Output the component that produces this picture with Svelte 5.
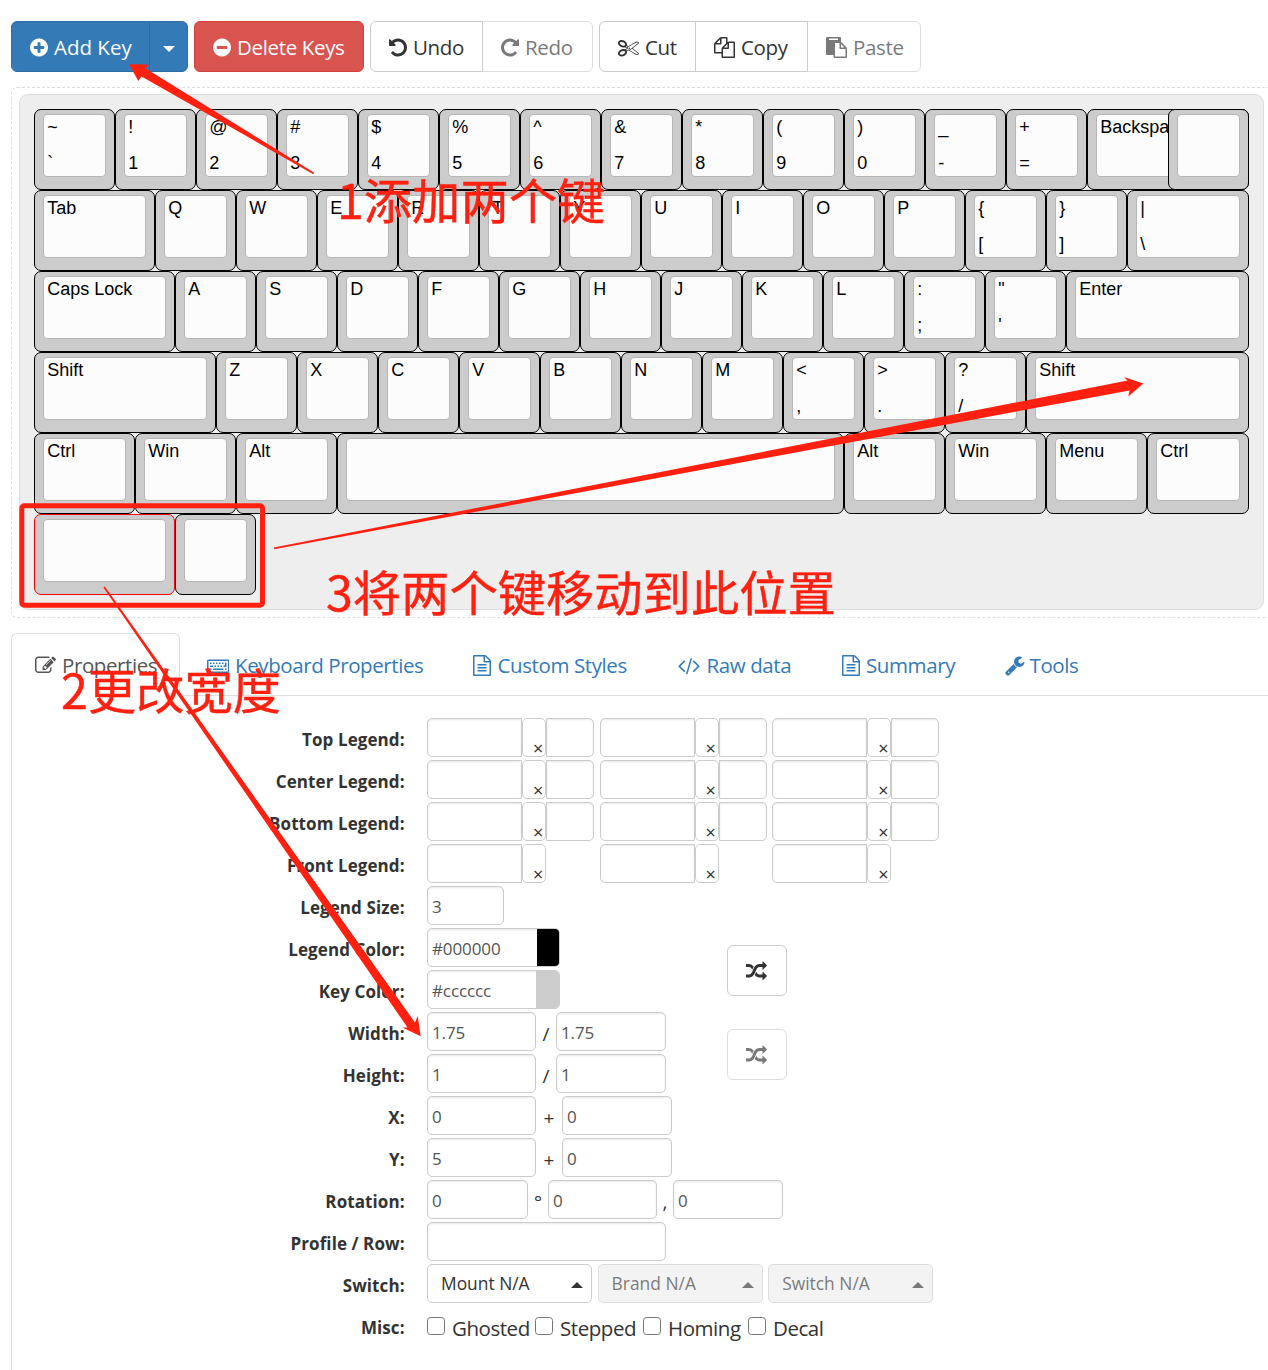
<script>
  const circle = 'm320-64q0 209-103 385.5t-279.5 279.5-385.5 103-385.5-103-279.5-279.5-103-385.5 103-385.5 279.5-279.5 385.5-103 385.5 103 279.5 279.5 103 385.5z';
  const undoPath = 'M1664 896q0 156-61 298t-164 245-245 164-298 61q-172 0-327-72.5t-264-204.5q-7-10-6.5-22.5t8.5-20.5l137-138q10-9 25-9 16 2 23 12 73 95 179 147t225 52q104 0 198.5-40.5t163.5-109.5 109.5-163.5 40.5-198.5-40.5-198.5-109.5-163.5-163.5-109.5-198.5-40.5q-98 0-188 35.5t-160 101.5l137 138q31 30 14 69-17 40-59 40h-448q-26 0-45-19t-19-45v-448q0-42 40-59 39-17 69 14l130 129q107-101 244.5-156.5t284.5-55.5q156 0 298 61t245 164 164 245 61 298z';
  const icons = {
    plus: { box: '128 0 1536 1792', w: 18, d: 'M1344 960v-128q0-26-19-45t-45-19h-256v-256q0-26-19-45t-45-19h-128q-26 0-45 19t-19 45v256h-256q-26 0-45 19t-19 45v128q0 26 19 45t45 19h256v256q0 26 19 45t45 19h128q26 0 45-19t19-45v-256h256q26 0 45-19t19-45z' + circle },
    minus: { box: '128 0 1536 1792', w: 18, d: 'M1344 960v-128q0-26-19-45t-45-19h-768q-26 0-45 19t-19 45v128q0 26 19 45t45 19h768q26 0 45-19t19-45z' + circle },
    undo: { box: '128 0 1536 1792', w: 18, d: undoPath },
    redo: { box: '128 0 1536 1792', w: 18, d: undoPath, flip: true },
    cut: { box: '0 0 1792 1792', w: 21, d: 'M960 896q26 0 45 19t19 45-19 45-45 19-45-19-19-45 19-45 45-19zm300 64l507 398q28 20 25 56-5 35-35 51l-128 64q-13 7-29 7-17 0-31-8l-690-387-110 66q-8 4-12 5 14 49 10 97-7 77-56 147.5t-132 123.5q-132 84-277 84-136 0-222-78-90-84-79-207 7-76 56-147t131-124q132-84 278-84 83 0 151 31 9-13 22-22l122-73-122-73q-13-9-22-22-68 31-151 31-146 0-278-84-82-53-131-124t-56-147q-5-59 15.5-113t63.5-93q85-79 222-79 145 0 277 84 83 52 132 123t56 148q4 48-10 97 4 1 12 5l110 66 690-387q14-8 31-8 16 0 29 7l128 64q30 16 35 51 3 36-25 56zm-681-260q46-42 21-108t-106-117q-92-59-192-59-74 0-113 36-46 42-21 108t106 117q92 59 192 59 74 0 113-36zm-85 745q81-51 106-117t-21-108q-39-36-113-36-100 0-192 59-81 51-106 117t21 108q39 36 113 36 100 0 192-59zm178-613l96 58v-11q0-36 33-56l14-8-79-44-26 26q-3 3-10 11t-12 12q-2 2-4 3.5t-3 2.5zm224 224l96 32 736-576-128-64-768 431v113l-160 96 9 8q2 2 7 6 4 4 11 12t11 12l26 26zm704 416l128-64-520-408-177 138q-2 3-13 7z' },
    copy: { box: '0 0 1792 1792', w: 21, d: 'M1696 384q40 0 68 28t28 68v1216q0 40-28 68t-68 28h-960q-40 0-68-28t-28-68v-288h-544q-40 0-68-28t-28-68v-672q0-40 20-88t48-76l408-408q28-28 76-48t88-20h416q40 0 68 28t28 68v328q68-40 128-40h416zm-544 213l-299 299h299v-299zm-640-384l-299 299h299v-299zm196 647l316-316v-416h-384v416q0 40-28 68t-68 28h-416v640h512v-256q0-40 20-88t48-76zm956 804v-1152h-384v416q0 40-28 68t-68 28h-416v640h896z' },
    paste: { box: '0 0 1792 1792', w: 21, d: 'M768 1664h896v-640h-416q-40 0-68-28t-28-68v-416h-384v1152zm256-1440v-64q0-13-9.5-22.5t-22.5-9.5h-704q-13 0-22.5 9.5t-9.5 22.5v64q0 13 9.5 22.5t22.5 9.5h704q13 0 22.5-9.5t9.5-22.5zm256 672h299l-299-299v299zm512 128v672q0 40-28 68t-68 28h-960q-40 0-68-28t-28-68v-160h-544q-40 0-68-28t-28-68v-1344q0-40 28-68t68-28h1088q40 0 68 28t28 68v328q21 13 36 28l408 408q28 28 48 76t20 88z' },
    edit: { box: '0 0 1792 1792', w: 21, d: 'M888 1184l116-116-152-152-116 116v56h96v96h56zm440-720q-16-16-33 1l-350 350q-17 17-1 33t33-1l350-350q17-17 1-33zm80 594v190q0 119-84.5 203.5t-203.5 84.5h-832q-119 0-203.5-84.5t-84.5-203.5v-832q0-119 84.5-203.5t203.5-84.5h832q63 0 117 25 15 7 18 23 3 17-9 29l-49 49q-14 14-32 8-23-6-45-6h-832q-66 0-113 47t-47 113v832q0 66 47 113t113 47h832q66 0 113-47t47-113v-126q0-13 9-22l64-64q15-15 35-7t20 29zm-96-738l288 288-672 672h-288v-288zm444 132l-92 92-288-288 92-92q28-28 68-28t68 28l152 152q28 28 28 68t-28 68z' },
    keyboard: { box: '0 0 1920 1792', w: 22.5, d: 'M128 384h1664q128 0 128 128v896q0 128-128 128h-1664q-128 0-128-128v-896q0-128 128-128zM128 512v896h1664v-896zM256 1152h128v128h-128zM512 1152h896v128h-896zM1536 1152h128v128h-128zM256 896h256v128h-256zM640 896h128v128h-128zM896 896h128v128h-128zM1152 896h128v128h-128zM1408 896h128v-256h128v384h-256zM256 640h128v128h-128zM512 640h128v128h-128zM768 640h128v128h-128zM1024 640h128v128h-128zM1280 640h128v128h-128z' },
    file: { box: '128 0 1536 1792', w: 18, d: 'M1596 380q28 28 48 76t20 88v1152q0 40-28 68t-68 28h-1344q-40 0-68-28t-28-68v-1600q0-40 28-68t68-28h896q40 0 88 20t76 48zm-444-244v376h376q-10-29-22-41l-313-313q-12-12-41-22zm384 1528v-1024h-416q-40 0-68-28t-28-68v-416h-768v1536h1280zm-1024-864q0-14 9-23t23-9h704q14 0 23 9t9 23v64q0 14-9 23t-23 9h-704q-14 0-23-9t-9-23v-64zm736 224q14 0 23 9t9 23v64q0 14-9 23t-23 9h-704q-14 0-23-9t-9-23v-64q0-14 9-23t23-9h704zm0 256q14 0 23 9t9 23v64q0 14-9 23t-23 9h-704q-14 0-23-9t-9-23v-64q0-14 9-23t23-9h704z' },
    code: { box: '-20 0 1832 1792', w: 22, d: 'M553 1399l-50 50q-10 10-23 10t-23-10l-466-466q-10-10-10-23t10-23l466-466q10-10 23-10t23 10l50 50q10 10 10 23t-10 23l-393 393 393 393q10 10 10 23t-10 23zm591-1067l-373 1291q-4 13-15.5 19.5t-23.5 2.5l-62-17q-13-4-19.5-15.5t-2.5-24.5l373-1291q4-13 15.5-19.5t23.5-2.5l62 17q13 4 19.5 15.5t2.5 24.5zm657 651l-466 466q-10 10-23 10t-23-10l-50-50q-10-10-10-23t10-23l393-393-393-393q-10-10-10-23t10-23l50-50q10-10 23-10t23 10l466 466q10 10 10 23t-10 23z' },
    wrench: { box: '64 0 1664 1792', w: 19.5, d: 'M448 1472q0-26-19-45t-45-19-45 19-19 45 19 45 45 19 45-19 19-45zm644-420l-682 682q-37 37-90 37-52 0-91-37l-106-108q-38-36-38-90 0-53 38-91l681-681q39 98 114.5 173.5t173.5 114.5zm634-435q0 39-23 106-47 134-164.5 217.5t-258.5 83.5q-185 0-316.5-131.5t-131.5-316.5 131.5-316.5 316.5-131.5q58 0 121.5 16.5t107.5 46.5q16 11 16 28t-16 28l-293 169v224l193 107q5-3 79-48.5t135.5-81 70.5-35.5q15 0 23.5 10t8.5 25z' },
    random: { box: '0 0 1792 1792', w: 21, d: 'M666 481q-60 92-137 273-22-45-37-72.5t-40.5-63.5-51-56.5-63-35-81.5-14.5h-224q-14 0-23-9t-9-23v-192q0-14 9-23t23-9h224q250 0 410 225zm1126 799q0 14-9 23l-320 320q-9 9-23 9-13 0-22.5-9.5t-9.5-22.5v-192q-32 0-85 .5t-81 1-73-1-71-5-64-10.5-63-18.5-58-28.5-59-40-55-53.5-56-69.5q59-93 136-273 22 45 37 72.5t40.5 63.5 51 56.5 63 35 81.5 14.5h256v-192q0-14 9-23t23-9q12 0 24 10l319 319q9 9 9 23zm0-896q0 14-9 23l-320 320q-9 9-23 9-13 0-22.5-9.5t-9.5-22.5v-192h-256q-48 0-87 15t-69 45-51 61.5-45 77.5q-32 62-78 171-29 66-49.5 111t-54 105-64 100-74 83-90 68.5-106.5 42-128 16.5h-224q-14 0-23-9t-9-23v-192q0-14 9-23t23-9h224q48 0 87-15t69-45 51-61.5 45-77.5q32-62 78-171 29-66 49.5-111t54-105 64-100 74-83 90-68.5 106.5-42 128-16.5h256v-192q0-14 9-23t23-9q12 0 24 10l319 319q9 9 9 23z' }
  };

  // Upper legend, lower legend, width in key units, modifier class
  const k = (a, b = '', w = 1, flag = '') => ({ a, b, w, flag });
  const layout = [
    [k('~', '`'), k('!', '1'), k('@', '2'), k('#', '3'), k('$', '4'), k('%', '5'), k('^', '6'), k('&', '7'), k('*', '8'), k('(', '9'), k(')', '0'), k('_', '-'), k('+', '='), k('Backspace', '', 2), k('', '', 1, 'over')],
    [k('Tab', '', 1.5), ...[...'QWERTYUIOP'].map((c) => k(c)), k('{', '['), k('}', ']'), k('|', '\\', 1.5)],
    [k('Caps Lock', '', 1.75), ...[...'ASDFGHJKL'].map((c) => k(c)), k(':', ';'), k('"', "'"), k('Enter', '', 2.25)],
    [k('Shift', '', 2.25), ...[...'ZXCVBNM'].map((c) => k(c)), k('<', ','), k('>', '.'), k('?', '/'), k('Shift', '', 2.75)],
    [k('Ctrl', '', 1.25), k('Win', '', 1.25), k('Alt', '', 1.25), k('', '', 6.25), k('Alt', '', 1.25), k('Win', '', 1.25), k('Menu', '', 1.25), k('Ctrl', '', 1.25)],
    [k('', '', 1.75, 'selected'), k('')]
  ];
  // Snap every key edge down to a whole pixel
  const rows = layout.map((row) => {
    let units = 0;
    return row.map((key) => {
      const start = Math.floor(units * 81);
      units += key.w;
      return { ...key, px: Math.floor(units * 81) - start };
    });
  });

  const tabs = [
    ['edit', 'Properties', 't-prop'],
    ['keyboard', 'Keyboard Properties', 't-kbd'],
    ['file', 'Custom Styles', 't-css'],
    ['code', 'Raw data', 't-raw'],
    ['file', 'Summary', 't-sum'],
    ['wrench', 'Tools', 't-tools']
  ];
  const misc = [['Ghosted', 108], ['Stepped', 108], ['Homing', 105], ['Decal', 90]];
</script>

{#snippet icon(name)}
  <svg class="icon" class:flip={icons[name].flip} viewBox={icons[name].box} width={icons[name].w} height="21" fill="currentColor" fill-rule={name === 'keyboard' ? 'evenodd' : 'nonzero'}><path d={icons[name].d} /></svg>
{/snippet}

{#snippet legendRow(label, full)}
  <div class="row">
    <span class="label">{label}</span>
    {#each [0, 1, 2] as n}
      <div class="legend">
        <span class="input joined"></span>
        <span class="picker">×</span>
        {#if full}<span class="input size"></span>{/if}
      </div>
    {/each}
  </div>
{/snippet}

<main>
  <div class="toolbar">
    <div class="group">
      <button class="btn primary add">{@render icon('plus')}<span>Add Key</span></button>
      <button class="btn primary drop" aria-label="More"><i class="caret"></i></button>
    </div>
    <button class="btn danger">{@render icon('minus')}<span>Delete Keys</span></button>
    <div class="group">
      <button class="btn undo">{@render icon('undo')}<span>Undo</span></button>
      <button class="btn redo off">{@render icon('redo')}<span>Redo</span></button>
    </div>
    <div class="group">
      <button class="btn cut">{@render icon('cut')}<span>Cut</span></button>
      <button class="btn copy">{@render icon('copy')}<span>Copy</span></button>
      <button class="btn paste off">{@render icon('paste')}<span>Paste</span></button>
    </div>
  </div>

  <div class="dashed">
    <div class="board">
      {#each rows as row}
        <div class="keys">
          {#each row as key}
            <div class="key {key.flag}" style:width="{key.px}px">
              <div class="cap"><span>{key.a}</span><span>{key.b}</span></div>
            </div>
          {/each}
        </div>
      {/each}
    </div>
  </div>

  <nav>
    {#each tabs as [ic, text, cls], i}
      <a class="tab {cls}" class:active={i === 0}>{@render icon(ic)}<span>{text}</span></a>
    {/each}
  </nav>

  <section>
    {@render legendRow('Top Legend:', true)}
    {@render legendRow('Center Legend:', true)}
    {@render legendRow('Bottom Legend:', true)}
    {@render legendRow('Front Legend:', false)}
    <div class="row"><span class="label">Legend Size:</span><span class="input w77">3</span></div>
    <div class="pair">
      <div class="rows">
        <div class="row"><span class="label">Legend Color:</span><span class="input color">#000000<i class="swatch black"></i></span></div>
        <div class="row"><span class="label">Key Color:</span><span class="input color">#cccccc<i class="swatch grey"></i></span></div>
      </div>
      <button class="btn swap" aria-label="Swap colors">{@render icon('random')}</button>
    </div>
    <div class="pair">
      <div class="rows">
        <div class="row"><span class="label">Width:</span><span class="input w109">1.75</span><span class="sep s20">/</span><span class="input w110">1.75</span></div>
        <div class="row"><span class="label">Height:</span><span class="input w109">1</span><span class="sep s20">/</span><span class="input w110">1</span></div>
      </div>
      <button class="btn swap off" aria-label="Swap sizes">{@render icon('random')}</button>
    </div>
    <div class="row"><span class="label">X:</span><span class="input w109">0</span><span class="sep s26">+</span><span class="input w110">0</span></div>
    <div class="row"><span class="label">Y:</span><span class="input w109">5</span><span class="sep s26">+</span><span class="input w110">0</span></div>
    <div class="row"><span class="label">Rotation:</span><span class="input w101">0</span><span class="sep s20">°</span><span class="input w109">0</span><span class="sep s16">,</span><span class="input w110">0</span></div>
    <div class="row"><span class="label">Profile / Row:</span><span class="input w239"></span></div>
    <div class="row">
      <span class="label">Switch:</span>
      <span class="select">Mount N/A<i class="up"></i></span>
      <span class="select dim">Brand N/A<i class="up"></i></span>
      <span class="select dim">Switch N/A<i class="up"></i></span>
    </div>
    <div class="row">
      <span class="label">Misc:</span>
      {#each misc as [text, w]}
        <span class="check" style:width="{w}px"><i class="box"></i><span>{text}</span></span>
      {/each}
    </div>
  </section>

  <div class="notes">
    <svg width="1268" height="1370" viewBox="0 0 1268 1370" fill="#ff2010">
      <path d="M313.3 174.2L141.5 76.5 138.3 81 129 64.3 148 64.5 145.8 68.5 314.2 172.8Z" />
      <path d="M274.2 549.2L273.8 547.6 1127.5 380.6 1124 377 1143.3 383.5 1128.3 396.5 1129.5 390.5Z" />
      <path d="M103.4 587.5L104.8 586.5 415 1022.5 417.7 1016 420.7 1036.3 402.3 1027.5 407.5 1027.5Z" />
      <rect x="21.8" y="505.8" width="240.7" height="99.5" rx="2.5" fill="none" stroke="#ff2010" stroke-width="5" />
    </svg>
    <p class="note n1">1添加两个键</p>
    <p class="note n2">2更改宽度</p>
    <p class="note n3">3将两个键移动到此位置</p>
  </div>
</main>

<style>
  :global(body) { background: #fff; overflow: hidden; }
  * { box-sizing: border-box; }
  main {
    position: relative;
    width: 1268px;
    height: 1370px;
    overflow: hidden;
    padding-left: 11px;
    color: #333;
    font-family: "Open Sans", "Noto Sans", sans-serif;
    font-size: 20.5px;
  }
  .icon { flex: none; display: block; }
  .flip { transform: scaleX(-1); }

  .toolbar { display: flex; gap: 6px; padding-top: 21px; height: 87px; }
  .group { display: flex; }
  .btn {
    display: flex;
    align-items: center;
    height: 51px;
    padding: 1px 0 0 18px;
    gap: 6px;
    border: 1px solid #ccc;
    border-radius: 6px;
    background: #fff;
    color: #333;
    font: inherit;
    letter-spacing: -0.35px;
    white-space: nowrap;
  }
  .btn span { line-height: 28px; padding-bottom: 1px; }
  .group .btn:not(:last-child) { border-top-right-radius: 0; border-bottom-right-radius: 0; }
  .group .btn:not(:first-child) { border-top-left-radius: 0; border-bottom-left-radius: 0; margin-left: -1px; }
  .primary { background: #337ab7; border-color: #2e6da4; color: #fff; }
  .danger { background: #d9534f; border-color: #d43f3a; color: #fff; width: 170px; }
  .off { opacity: 0.65; }
  .add { width: 139px; letter-spacing: 0; }
  .drop { width: 39px; padding: 5px 0 0; justify-content: center; }
  .undo { width: 113px; }
  .redo { width: 111px; }
  .cut { width: 97px; }
  .copy { width: 113px; }
  .paste { width: 114px; }
  .caret { border: 6px solid transparent; border-top-color: #fff; border-bottom: 0; }

  .dashed {
    width: 1270px;
    height: 531px;
    padding: 6px 0 0 7px;
    border: 1px dashed #ddd;
    border-radius: 6px;
  }
  .board {
    width: 1245px;
    height: 516px;
    padding: 14px;
    border: 1px solid #ddd;
    border-radius: 9px;
    background: #eee;
  }
  .keys { display: flex; height: 81px; }
  .key {
    flex: none;
    height: 81px;
    padding: 4px 8px 0;
    border: 1px solid #000;
    border-radius: 7px;
    background: #ccc;
  }
  .over { margin-left: -81px; }
  .selected { border-color: #f00; }
  .cap {
    height: 63px;
    padding: 2px 0 0 3.3px;
    border: 1px solid #b6b6b6;
    border-radius: 4px;
    background: #fcfcfc;
    color: #000;
    font: 18px/20px "Liberation Sans", Arial, sans-serif;
    overflow: hidden;
  }
  .cap span { display: block; height: 36px; white-space: nowrap; }

  nav { display: flex; margin-top: 15px; height: 63px; box-shadow: inset 0 -1px #ddd; color: #337ab7; letter-spacing: -0.4px; }
  .tab { display: flex; align-items: center; height: 63px; padding-top: 1px; white-space: nowrap; }
  .t-prop { width: 169px; padding-left: 23px; gap: 6px; }
  .t-prop span { padding-bottom: 2px; }
  .t-kbd { width: 293px; padding-left: 26.5px; gap: 6px; }
  .t-css { width: 205px; gap: 6.5px; }
  .t-raw { width: 164px; gap: 6.5px; }
  .t-sum { width: 163px; gap: 6px; }
  .t-tools { gap: 5px; }
  .active { border: 1px solid #ddd; border-bottom: 0; border-radius: 6px 6px 0 0; background: #fff; color: #555; }

  section { border-left: 1px solid #ddd; padding-top: 22px; height: 700px; font-size: 17px; }
  .row { display: flex; height: 42px; }
  .label { width: 392.6px; margin-right: 22.4px; text-align: right; font-weight: 700; line-height: 44px; letter-spacing: 0.08px; white-space: nowrap; }
  .input {
    height: 39px;
    padding-left: 4px;
    border: 1px solid #ccc;
    border-radius: 5px;
    background: #fff;
    box-shadow: inset 0 1px 2px rgba(0, 0, 0, 0.09);
    color: #555;
    line-height: 39px;
    letter-spacing: -0.1px;
  }
  .legend { display: flex; width: 172.6px; }
  .joined { width: 95px; border-radius: 5px 0 0 5px; }
  .picker { width: 24px; height: 39px; border: 1px solid #ccc; border-radius: 5px; padding: 20px 0 0 10px; font-size: 18px; line-height: 19px; }
  .size { width: 48px; border-radius: 0 5px 5px 0; }
  .w77 { width: 77px; }
  .w101 { width: 101px; }
  .w109 { width: 109px; }
  .w110 { width: 110px; }
  .w239 { width: 239px; }
  .color { display: flex; justify-content: space-between; width: 133px; }
  .swatch { width: 22px; height: 37px; border-radius: 0 4px 4px 0; }
  .black { background: #000; }
  .grey { background: #ccc; width: 23px; }
  .sep { text-align: center; line-height: 44px; font-size: 19px; }
  .s16 { width: 16px; }
  .s20 { width: 20px; }
  .s26 { width: 26px; }
  .pair { display: flex; align-items: center; height: 84px; }
  .rows { width: 715px; }
  .swap { width: 60px; margin-top: 1px; padding-top: 2px; }
  .select {
    display: flex;
    align-items: center;
    justify-content: space-between;
    width: 165px;
    height: 39px;
    margin-right: 5.6px;
    padding: 0 8px 1px 13px;
    border: 1px solid #ccc;
    border-radius: 5px;
    font-size: 17.4px;
  }
  .dim { background: #eee; opacity: 0.65; }
  .up { margin-top: 3px; border: 6px solid transparent; border-bottom-color: currentColor; border-top: 0; }
  .check { display: flex; font-size: 20.5px; line-height: 44px; letter-spacing: -0.45px; white-space: nowrap; }
  .box { width: 18px; height: 18px; margin: 11px 7px 0 0; border: 1.5px solid #767676; border-radius: 3.5px; }

  .notes { position: absolute; inset: 0; pointer-events: none; color: #ff2010; }
  .note {
    position: absolute;
    margin: 0;
    font: 48.3px/56px "Noto Sans CJK SC", sans-serif;
    -webkit-text-stroke: 0.4px #ff2010;
    white-space: nowrap;
  }
  .n1 { left: 337px; top: 170px; }
  .n2 { left: 61px; top: 660px; }
  .n3 { left: 326px; top: 562px; }
</style>
